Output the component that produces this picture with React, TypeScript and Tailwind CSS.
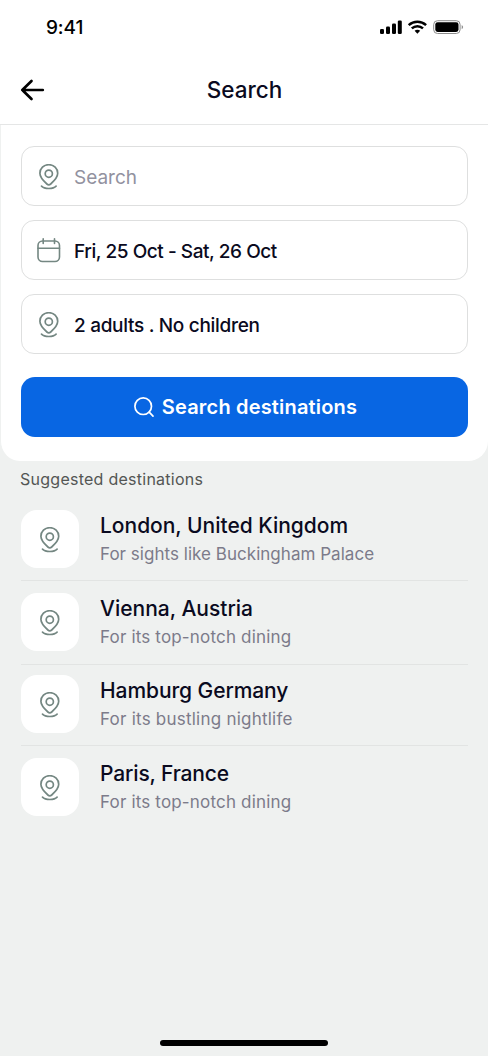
import type { ReactNode } from "react";

const destinations = [
  {
    name: "London, United Kingdom",
    note: "For sights like Buckingham Palace",
    rowClass: "h-[83px] pt-3",
    nameClass: "tracking-[-0.02px]",
    noteClass: "tracking-[0.03px]",
  },
  {
    name: "Vienna, Austria",
    note: "For its top-notch dining",
    rowClass: "h-[84px] pt-3",
    nameClass: "tracking-normal",
    noteClass: "tracking-[0.17px]",
  },
  {
    name: "Hamburg Germany",
    note: "For its bustling nightlife",
    rowClass: "h-[81px] pt-[10.4px]",
    nameClass: "tracking-[-0.08px]",
    noteClass: "tracking-[0.23px]",
  },
  {
    name: "Paris, France",
    note: "For its top-notch dining",
    rowClass: "h-[82px] pt-3",
    nameClass: "tracking-[-0.15px]",
    noteClass: "tracking-[0.17px]",
  },
];

function PinIcon() {
  return (
    <svg
      className="mt-px"
      width="20"
      height="26"
      viewBox="0 0.5 20 26"
      fill="none"
      stroke="#748782"
      strokeWidth="1.7"
      strokeLinecap="round"
      strokeLinejoin="round"
    >
      <path d="M9.800 1.200C4.700 1.200.9 5 .9 9.800c0 4.300 3 7.200 7 10.700 1.100 1 2.700 1 3.800 0 4-3.500 7-6.400 7-10.700 0-4.800-3.800-8.600-8.900-8.600Z" />
      <circle cx="9.800" cy="10.200" r="3.600" />
      <path d="M2.500 22.700c1.400 1.500 4 2.300 7.300 2.300s5.900-.8 7.300-2.300" />
    </svg>
  );
}

function CalendarIcon() {
  return (
    <svg
      width="24"
      height="26"
      viewBox="0 0 24 26"
      fill="none"
      stroke="#748782"
      strokeWidth="1.6"
      strokeLinecap="round"
    >
      <rect x="1" y="4" width="21.5" height="20.5" rx="4.5" />
      <path d="M1 11.300h21.500M6.200 1.700v4.800M17.500 1.700v4.800" />
    </svg>
  );
}

function StatusBar() {
  return (
    <div className="flex h-[54px] items-center justify-between pl-[46px] pr-6">
      <span className="pt-[2px] text-[19px] font-medium leading-6 tracking-[-0.1px]">
        9:41
      </span>
      <svg width="84" height="16" viewBox="0 0 84 16">
        <rect x="0" y="10" width="4" height="5" rx="1.3" />
        <rect x="6" y="7.5" width="4" height="7.5" rx="1.3" />
        <rect x="12" y="4.5" width="4" height="10.5" rx="1.3" />
        <rect x="17.8" y="1.5" width="4" height="13.5" rx="1.3" />
        <g fill="none" stroke="black" strokeWidth="2.5">
          <path d="M28.700 6.100c5-4.500 12.400-4.500 17.400 0" />
          <path d="M31.800 9.400c3.200-2.900 8-2.900 11.200 0" />
        </g>
        <path d="M34.600 11.800c1.600-1.300 4-1.300 5.600 0l-2.800 2.900Z" />
        <rect
          x="53.7"
          y="1.7"
          width="26.4"
          height="12.8"
          rx="3.8"
          fill="none"
          stroke="#8c8c8c"
        />
        <rect x="55.3" y="3.3" width="23.2" height="9.6" rx="2.3" />
        <path d="M81.700 6v4.200c1.900-.9 1.900-3.300 0-4.200Z" fill="#8c8c8c" />
      </svg>
    </div>
  );
}

function SiteHeader() {
  return (
    <header className="h-[125px] border-b border-[#e5e6e6] bg-white">
      <StatusBar />
      <div className="grid h-[71px] grid-cols-[24px_1fr_24px] items-center px-5">
        <svg
          width="25"
          height="22"
          viewBox="0 0 25 22"
          fill="none"
          stroke="black"
          strokeWidth="2.7"
          strokeLinecap="round"
          strokeLinejoin="round"
        >
          <path d="M11.500 2 2.300 11l9.200 9M2.300 11h20.500" />
        </svg>
        <h1 className="pl-px text-center text-[22.5px] font-medium leading-8 text-[#0a0a20]">
          Search
        </h1>
      </div>
    </header>
  );
}

function Field({ icon, children }: { icon: ReactNode; children: ReactNode }) {
  return (
    <div className="flex h-[60px] items-center rounded-[13px] border border-[#dedfdf] pl-[14px]">
      <span className="flex w-[26px] justify-center">{icon}</span>
      <span className="ml-3 pt-[3px] text-[19px] leading-6">{children}</span>
    </div>
  );
}

export default function App() {
  return (
    <main className="flex h-[1056px] w-[488px] flex-col bg-[#eff1f0] font-['Inter',sans-serif] text-black">
      <SiteHeader />
      <section className="h-[336px] rounded-b-[20px] border-l border-[#eff1f0] bg-white pl-5 pr-5 pt-[21px]">
        <div className="flex flex-col gap-[14px]">
          <Field icon={<PinIcon />}>
            <span className="text-[#92929f]">Search</span>
          </Field>
          <Field icon={<CalendarIcon />}>
            <span className="font-medium tracking-[-0.45px] text-[#0a0a20]">
              Fri, 25 Oct - Sat, 26 Oct
            </span>
          </Field>
          <Field icon={<PinIcon />}>
            <span className="font-medium tracking-[-0.3px] text-[#0a0a20]">
              2 adults . No children
            </span>
          </Field>
        </div>
        <button className="mt-[22.5px] flex h-[60px] w-full items-center justify-center gap-2 rounded-[14px] bg-[#0866e3] pl-[2px] text-[20px] font-semibold leading-6 tracking-[0.18px] text-white">
          <svg
            width="20"
            height="20"
            viewBox="0 0 20 20"
            fill="none"
            stroke="white"
            strokeWidth="1.7"
            strokeLinecap="round"
          >
            <circle cx="9.2" cy="9.2" r="8.3" />
            <path d="m15.200 15.200 3.800 3.900" />
          </svg>
          <span>Search destinations</span>
        </button>
      </section>
      <h2 className="mt-[7px] pl-5 text-[16px] leading-[22px] tracking-[0.26px] text-[#535654]">
        Suggested destinations
      </h2>
      <ul className="mt-2 pl-[21px] pr-5">
        {destinations.map((place) => (
          <li
            key={place.name}
            className={`flex items-start gap-[21px] border-b border-[#e2e4e3] last:border-b-0 ${place.rowClass}`}
          >
            <span className="flex size-[58px] items-center justify-center rounded-[16px] bg-white">
              <PinIcon />
            </span>
            <div className="pt-px">
              <p
                className={`text-[21px] font-medium leading-[30px] text-[#0a0a20] ${place.nameClass}`}
              >
                {place.name}
              </p>
              <p
                className={`text-[17px] leading-[27px] text-[#7c7b8a] ${place.noteClass}`}
              >
                {place.note}
              </p>
            </div>
          </li>
        ))}
      </ul>
      <div className="mb-[10px] mt-auto h-[6px] w-[168px] self-center rounded-full bg-black" />
    </main>
  );
}
